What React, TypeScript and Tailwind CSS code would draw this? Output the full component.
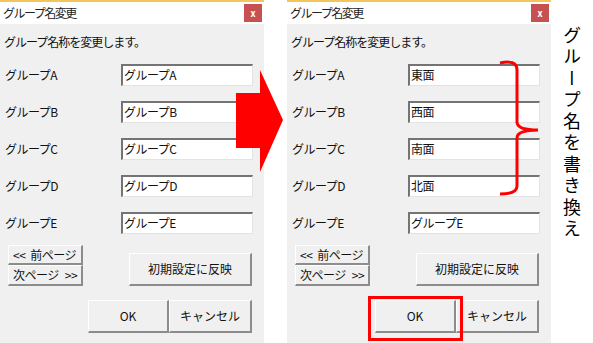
import React from 'react';

const font = "font-['Noto_Sans_CJK_JP','Noto_Sans',sans-serif]";

const labels = ['グループA', 'グループB', 'グループC', 'グループD', 'グループE'];

function Btn({ children, className = '' }: { children: React.ReactNode; className?: string }) {
  return (
    <div
      className={`flex items-center justify-center whitespace-nowrap bg-[#f0f0f0] border-t border-l border-t-white border-l-white border-r-2 border-b-2 border-r-[#8c8c8c] border-b-[#8c8c8c] text-[12px] text-[#111] ${className}`}
    >
      {children}
    </div>
  );
}

function Dialog({ values, highlightOk = false }: { values: string[]; highlightOk?: boolean }) {
  return (
    <div className="w-[264px] h-[343px] flex flex-col border-t-2 border-[#f3c65c] shrink-0">
      <div className="h-[22px] bg-white flex items-center justify-between pl-[3px] pr-[2px]">
        <span className="text-[12px] tracking-[-1.5px] text-[#222]">グループ名変更</span>
        <div className="w-[18px] h-[18px] bg-[#c75050] flex items-center justify-center text-white text-[9px] font-bold leading-none">
          x
        </div>
      </div>
      <div className="flex-1 bg-[#f0f0f0] flex flex-col pt-[10px]">
        <div className="pl-[4px] text-[12px] leading-[16px] tracking-[-1px] text-[#111]">グループ名称を変更します。</div>
        <div className="flex flex-col gap-[15px] mt-[14px]">
          {labels.map((l, i) => (
            <div key={l} className="flex items-center h-[22px]">
              <div className="w-[121px] pl-[5px] text-[12px] tracking-[-0.5px] text-[#111]">{l}</div>
              <div className="w-[132px] h-[22px] bg-white border-t-2 border-l-2 border-r border-b border-t-[#747474] border-l-[#747474] border-r-[#e3e3e3] border-b-[#e3e3e3] pl-[1px] text-[12px] leading-[18px] tracking-[-0.5px] text-[#111]">
                {values[i]}
              </div>
            </div>
          ))}
        </div>
        <div className="flex items-end mt-[11px] pl-[8px]">
          <div className="flex flex-col w-[75px]">
            <Btn className="h-[20px] justify-start pl-[4px] tracking-[-0.5px]">
              <span className="mr-[5px]">{'<<'}</span>前ページ
            </Btn>
            <Btn className="h-[21px] justify-start pl-[4px] tracking-[-0.5px]">
              次ページ<span className="ml-[6px]">{'>>'}</span>
            </Btn>
          </div>
          <Btn className="ml-[46px] w-[123px] h-[33px]">初期設定に反映</Btn>
        </div>
        <div className="flex mt-[14px] pl-[88px]">
          <div className="relative">
            <Btn className="w-[81px] h-[33px]">OK</Btn>
            {highlightOk && (
              <div className="absolute left-[-7px] top-[-4px] w-[95px] h-[45px] border-[3px] border-[#ff0000]" />
            )}
          </div>
          <Btn className="w-[83px] h-[33px]">キャンセル</Btn>
        </div>
      </div>
    </div>
  );
}

export default function App() {
  return (
    <div className={`relative w-[593px] h-[343px] bg-white overflow-hidden ${font}`}>
      <div className="flex">
        <Dialog values={labels} />
        <div className="w-[23px] shrink-0" />
        <Dialog values={['東面', '西面', '南面', '北面', 'グループE']} highlightOk />
        <div className="flex-1 flex justify-center pt-[26px]">
          <div className="[writing-mode:vertical-rl] text-[18px] tracking-[3.5px] text-black leading-none">
            グループ名を書き換え
          </div>
        </div>
      </div>

      {/* big arrow between the two dialogs */}
      <svg className="absolute left-[236px] top-[70px]" width="48" height="102" viewBox="0 0 48 102">
        <polygon points="0,23 24,23 24,0 47,50 24,102 24,78 0,78" fill="#ff0000" />
      </svg>

      {/* brace over the edited fields */}
      <svg className="absolute left-[496px] top-[58px]" width="46" height="140" viewBox="0 0 46 140">
        <path
          d="M4 5 C14 3 21 4 21 12 L21 64 C21 70 30 72 42 72 C30 72 21 74 21 80 L21 128 C21 134 14 136 4 136"
          fill="none"
          stroke="#ff0000"
          strokeWidth="3"
        />
      </svg>
    </div>
  );
}
